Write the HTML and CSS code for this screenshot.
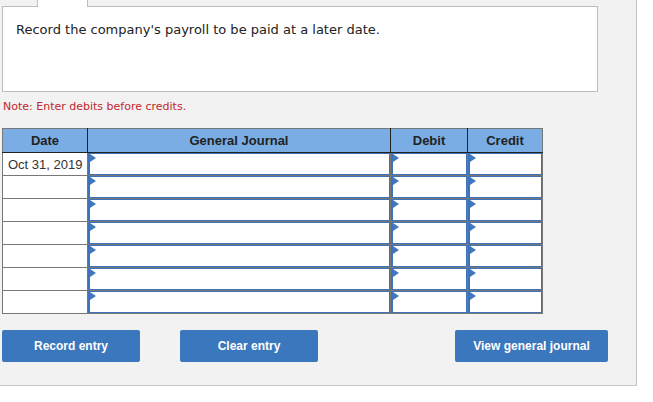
FILE: index.html
```html
<!DOCTYPE html>
<html>
<head>
<meta charset="utf-8">
<link rel="stylesheet" href="styles.css">
</head>
<body>
<div class="panel">
  <div class="tab"></div>
  <div class="question">Record the company's payroll to be paid at a later date.</div>
  <div class="note">Note: Enter debits before credits.</div>
  <table class="journal">
    <thead>
      <tr>
        <th class="c-date">Date</th>
        <th class="c-gj">General Journal</th>
        <th class="c-dr">Debit</th>
        <th class="c-cr">Credit</th>
      </tr>
    </thead>
    <tbody>
      <tr><td class="date">Oct 31, 2019</td><td class="in"><div class="box"></div></td><td class="in"><div class="box"></div></td><td class="in"><div class="box"></div></td></tr>
      <tr><td class="date"></td><td class="in"><div class="box"></div></td><td class="in"><div class="box"></div></td><td class="in"><div class="box"></div></td></tr>
      <tr><td class="date"></td><td class="in"><div class="box"></div></td><td class="in"><div class="box"></div></td><td class="in"><div class="box"></div></td></tr>
      <tr><td class="date"></td><td class="in"><div class="box"></div></td><td class="in"><div class="box"></div></td><td class="in"><div class="box"></div></td></tr>
      <tr><td class="date"></td><td class="in"><div class="box"></div></td><td class="in"><div class="box"></div></td><td class="in"><div class="box"></div></td></tr>
      <tr><td class="date"></td><td class="in"><div class="box"></div></td><td class="in"><div class="box"></div></td><td class="in"><div class="box"></div></td></tr>
      <tr><td class="date"></td><td class="in"><div class="box"></div></td><td class="in"><div class="box"></div></td><td class="in"><div class="box"></div></td></tr>
    </tbody>
  </table>
  <div class="actions">
    <button class="btn btn-record">Record entry</button>
    <button class="btn btn-clear">Clear entry</button>
    <button class="btn btn-view">View general journal</button>
  </div>
</div>
</body>
</html>
```
FILE: styles.css
```css
html, body {
  margin: 0;
  padding: 0;
  background: #ffffff;
}

.panel {
  box-sizing: border-box;
  width: 637px;
  height: 386px;
  background: #f2f2f2;
  border-right: 1px solid #c6c6c6;
  border-bottom: 1px solid #c6c6c6;
  padding-left: 2px;
}

.tab {
  box-sizing: border-box;
  position: relative;
  z-index: 1;
  margin-left: 35px;
  width: 51px;
  height: 7px;
  margin-bottom: -1px;
  background: #ffffff;
  border-left: 1px solid #bdbdbd;
  border-right: 1px solid #bdbdbd;
}

.question {
  box-sizing: border-box;
  width: 596px;
  height: 86px;
  background: #ffffff;
  border: 1px solid #bdbdbd;
  padding: 15px 13px;
  font-family: "DejaVu Sans", Verdana, sans-serif;
  font-size: 13px;
  line-height: 16px;
  color: #222222;
}

.note {
  margin-top: 8px;
  margin-left: 1px;
  font-family: "DejaVu Sans", Verdana, sans-serif;
  font-size: 11px;
  line-height: 13px;
  color: #c1272d;
}

.journal {
  margin-top: 15px;
  border-collapse: collapse;
  table-layout: fixed;
  width: 540px;
  font-family: "Liberation Sans", Arial, sans-serif;
}

.journal th {
  height: 23px;
  padding: 0;
  background: #7aade4;
  color: #222222;
  font-size: 13px;
  font-weight: bold;
  text-align: center;
  border: 1px solid #777777;
  border-bottom: 1px solid #222222;
  border-right: 1px solid #222222;
}

.journal th.c-cr {
  border-right: 1px solid #777777;
}

.c-date { width: 84px; }
.c-gj { width: 302px; }
.c-dr { width: 76px; }
.c-cr { width: 74px; }

.journal td {
  height: 22px;
  padding: 0;
  border: 1px solid #777777;
  background: #ffffff;
}

.journal td.date {
  font-size: 13px;
  color: #333333;
  padding-left: 5px;
  white-space: nowrap;
}

.journal td.in {
  position: relative;
}

.box {
  position: relative;
  box-sizing: border-box;
  height: 22px;
  border: 1px solid #3f72b6;
  border-left-width: 2px;
  background: #ffffff;
}

.box::before {
  content: "";
  position: absolute;
  left: 0;
  top: 0;
  width: 0;
  height: 0;
  border-top: 4px solid transparent;
  border-bottom: 4px solid transparent;
  border-left: 6px solid #3f78c0;
}

.actions {
  display: flex;
  width: 606px;
  margin-top: 16px;
}

.btn {
  box-sizing: border-box;
  height: 32px;
  border: none;
  border-radius: 2px;
  background: #3a77bc;
  color: #ffffff;
  font-family: "Liberation Sans", Arial, sans-serif;
  font-size: 12px;
  font-weight: bold;
  padding: 0;
}

.btn-record { width: 138px; }
.btn-clear { width: 138px; margin-left: 40px; }
.btn-view { width: 153px; margin-left: auto; }
```
